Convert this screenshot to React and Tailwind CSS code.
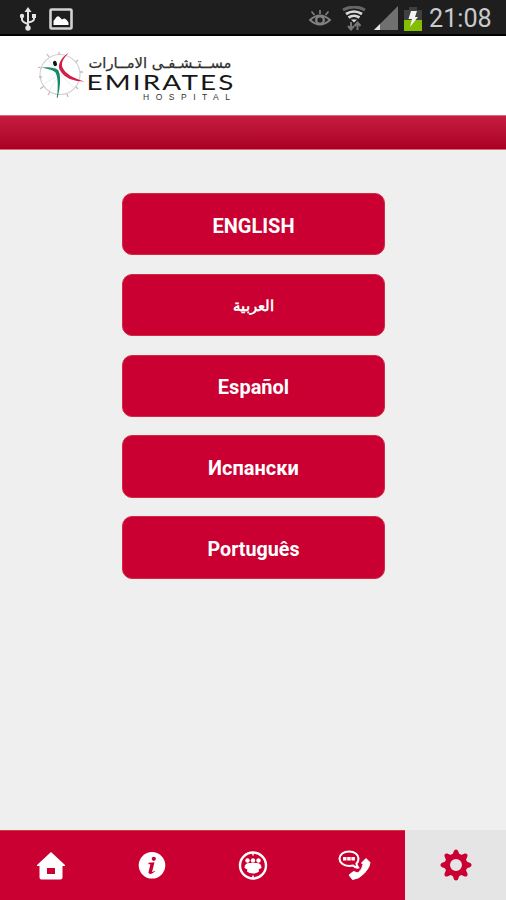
import { useState } from "react";

const languages = [
  { id: "en", label: "ENGLISH", className: "text-[20px] pt-[3px]" },
  { id: "ar", label: "العربية", className: "text-[15px] pt-[2px]" },
  { id: "es", label: "Español", className: "text-[20px] pt-[3px]" },
  { id: "ru", label: "Испански", className: "text-[20px] pt-[3px]" },
  { id: "pt", label: "Português", className: "text-[19.700px] pt-[4px]" },
];

function StatusBar() {
  return (
    <div className="flex h-[36px] shrink-0 items-center justify-between border-b-2 border-black bg-[#1e1e1e] pl-[19px] pr-[15px]">
      <div className="flex items-center gap-[12px] pt-[3px]">
        <svg width="18" height="24" viewBox="0 0 18 24" fill="none" stroke="#e4e4e4" strokeWidth="2">
          <path d="M9 3v18M3 9v3.500q0 2.500 6 4.500M15 9v3q0 2.500-6 3.500" />
          <path d="M9 0l3.500 5h-7z" fill="#e4e4e4" stroke="none" />
          <circle cx="9" cy="21" r="2.700" fill="#e4e4e4" stroke="none" />
          <circle cx="3" cy="9" r="2.200" fill="#e4e4e4" stroke="none" />
          <path d="M13 7h4v4h-4z" fill="#e4e4e4" stroke="none" />
        </svg>
        <svg width="24" height="22" viewBox="0 0 24 22">
          <rect x="1.500" y="1.500" width="21" height="19" rx="1" fill="none" stroke="#d2d2d2" strokeWidth="2.600" />
          <path d="M4.500 17v-4l3-4q2-2 4 1l1.500 1.500 2-1q2 0 4.500 4V17z" fill="#fff" />
        </svg>
      </div>
      <div className="flex items-center pt-[2px]">
        <svg width="22" height="17" viewBox="0 0 22 17" fill="none" stroke="#808080" strokeWidth="2.400">
          <path d="M1 10q10-9 20 0-10 9-20 0z" strokeWidth="2" />
          <circle cx="11" cy="10" r="3.800" />
          <path d="M11 4V0M5.500 5L2.500 1.500M16.500 5L19.500 1.500" strokeWidth="1.700" />
        </svg>
        <svg className="ml-[11px]" width="24" height="25" viewBox="0 0 24 25" fill="none">
          <path d="M1 4q11-6 22 0" stroke="#666" strokeWidth="3" />
          <path d="M4 8q8-5 16 0M6.500 11.500q5.500-3.500 11 0" stroke="#d8d8d8" strokeWidth="2.700" />
          <path d="M9 13.500h6L12 16.500z" fill="#ddd" />
          <path d="M9 16v7M6 20l3 3.500 3-3.500M15.500 24v-7M12.500 20l3-3.500 3 3.500" stroke="#777" strokeWidth="2" />
        </svg>
        <svg className="ml-[8px]" width="24" height="24" viewBox="0 0 24 24">
          <path d="M24 0v24H0z" fill="#707070" />
          <path d="M6 18v6H0z" fill="#e5e5e5" />
        </svg>
        <svg className="ml-[6px]" width="18" height="25" viewBox="0 0 18 25">
          <path d="M5 1h8v3h5v10H0V4h5z" fill="#404040" />
          <path d="M0 14h18v11H0z" fill="#85bd00" />
          <path d="M7 5h6l-2 6h3L6 21l2-8H4.500z" fill="#f3f3f3" />
        </svg>
        <span className="ml-[7px] w-[62px] whitespace-nowrap pt-px text-[25.200px] leading-[30px] text-[#cacaca]">21:08</span>
      </div>
    </div>
  );
}

function Logo() {
  return (
    <svg width="200" height="56" viewBox="36 48 200 56">
      <circle cx="60" cy="74.500" r="20" fill="none" stroke="#cfcfcf" strokeWidth="1.100" />
      <path
        d="M41 68l-3-1M44 86l-4 3M49 57l-2-3M59 55v-3M76 62l2-2M80 72h3M76 87l2 2M67 94l1 3M50 92l-2 3M42 77h-3"
        stroke="#bcbcbc"
        strokeWidth="1.300"
      />
      <path d="M60 74L48 60M60 74L44 84M60 74l14 14M60 74l-11 17" stroke="#e4e4e4" strokeWidth=".7" />
      <path d="M41.500 67.500q12-1 16.500 2.500c2.800 4 3 15-.5 28-.8 0-1-1 0-5 .5-8 .5-16-2-20.500-3-3-8-3.500-14-5z" fill="#168a62" />
      <path d="M69 52.500c-6 6-8 10.500-6.500 15C65.500 74 73 78 84.500 81.500c-10 0-20.500-3-25-12-2-5 1.500-12 9.500-17z" fill="#d51d49" />
      <ellipse cx="55" cy="63.500" rx="1.900" ry="2.700" fill="#151515" transform="rotate(-20 55 63.500)" />
      <text
        x="160" y="68" textAnchor="middle" direction="rtl" textLength="143" lengthAdjust="spacingAndGlyphs"
        fill="#303030" stroke="#303030" strokeWidth=".25"
        className="font-['DejaVu_Sans','Noto_Sans',sans-serif] text-[14px]"
      >
        مســتـشـفـى الامــارات
      </text>
      <g transform="translate(86.500 90.300) scale(1.36 1)">
        <text x="0" y="0" textLength="108" fill="#171717" className="font-['Lato',sans-serif] text-[20.500px]">
          EMIRATES
        </text>
      </g>
      <text x="143" y="100.300" textLength="87" fill="#333" className="font-['Liberation_Sans',sans-serif] text-[8.500px]">
        HOSPITAL
      </text>
    </svg>
  );
}

function HomeIcon() {
  return (
    <svg width="28" height="28" viewBox="0 0 28 28">
      <path
        d="M14 0L28 13v1h-2.500v11.500q0 2-2 2h-19q-2 0-2-2V14H0v-1zM10 16v6h8v-6z"
        fill="#fff" fillRule="evenodd"
      />
    </svg>
  );
}

function InfoIcon() {
  return (
    <svg width="28" height="28" viewBox="0 0 28 28">
      <circle cx="14" cy="13.300" r="13.300" fill="#fff" />
      <circle cx="15.800" cy="6.800" r="2.100" fill="#c90031" />
      <path d="M10.500 10.800l6-.5-2.400 9.500q0 .8 2.400-1.100l.4.700q-5 4.200-6.500 1.400l2-8.500h-2z" fill="#c90031" />
    </svg>
  );
}

function PeopleIcon() {
  return (
    <svg width="30" height="30" viewBox="0 0 30 30">
      <circle cx="15" cy="14.500" r="13" fill="none" stroke="#fff" strokeWidth="2.400" />
      <path d="M15 2v2.500M15 24.500V27" stroke="#fff" strokeWidth="1.500" />
      <g fill="#fff">
        <circle cx="9.500" cy="9.500" r="2.200" />
        <circle cx="15" cy="9.500" r="2.200" />
        <circle cx="20.500" cy="9.500" r="2.200" />
        <path d="M6.500 17q0-5 5-5h7q5 0 5 5l-3 1.500h-11z" />
        <path d="M9 20.500q0-4.500 4-4.500h4q4 0 4 4.500-2 2-6 2t-6-2z" />
      </g>
    </svg>
  );
}

function ContactIcon() {
  return (
    <svg className="mr-[2px]" width="34" height="32" viewBox="0 0 34 32">
      <path d="M12 1.500c-5.500 0-9.500 3-9.500 7s4 7.500 9.500 7.500l4-.5q2.500 2.500 5 2-1.500-2-1.500-4 2-2 2-5c0-4-4-7-9.500-7z" fill="none" stroke="#fff" strokeWidth="2.100" />
      <path d="M6 7h3.500v3.500H6zM10.200 7h3.500v3.500h-3.500zM14.400 7h3.500v3.500h-3.500z" fill="#fff" />
      <path d="M29 8.500l4 4q0 4.500-5.500 10.500t-12 6.500l-3.500-4.500 4.500-3.500 4.500 1.500q4.500-4 5-8.500l-1.500-1.500z" fill="#fff" stroke="#fff" strokeLinejoin="round" />
    </svg>
  );
}

function SettingsIcon() {
  const teeth = [0, 45, 90, 135, 180, 225, 270, 315];
  return (
    <svg className="ml-px" width="32" height="32" viewBox="0 0 32 32" fill="#c90031">
      {teeth.map((angle) => (
        <path key={angle} d="M11.500 8L14 1.700q2-2.500 4 0L20.500 8z" transform={`rotate(${angle} 16 16)`} />
      ))}
      <circle cx="16" cy="16" r="8.700" fill="none" stroke="#c90031" strokeWidth="5.400" />
    </svg>
  );
}

const tabs = [
  { id: "home", icon: HomeIcon },
  { id: "info", icon: InfoIcon },
  { id: "people", icon: PeopleIcon },
  { id: "contact", icon: ContactIcon },
  { id: "settings", icon: SettingsIcon },
];

function App() {
  const [active, setActive] = useState("settings");

  return (
    <div className="flex h-[900px] w-full flex-col bg-[#efefef] font-['Roboto',sans-serif]">
      <StatusBar />
      <header className="flex h-[79px] shrink-0 items-start bg-white pl-[36px] pt-[12px]">
        <Logo />
      </header>
      <div className="h-[35px] shrink-0 border-y border-[#d56b7d] bg-linear-to-b from-[#c71b40] to-[#a90023]" />

      <main className="flex flex-1 flex-col items-center gap-[18.400px] pl-px pt-[43px]">
        {languages.map((lang) => (
          <button
            key={lang.id}
            className={`h-[62.400px] w-[263px] rounded-[10px] border border-[#d32a43] bg-[#c90031] font-bold text-white ${lang.className}`}
          >
            {lang.label}
          </button>
        ))}
      </main>

      <nav className="grid h-[70px] shrink-0 grid-cols-5">
        {tabs.map(({ id, icon: Icon }) => (
          <button
            key={id}
            onClick={() => setActive(id)}
            className={`flex items-center justify-center pl-px ${active === id ? "bg-[#e5e5e5]" : "border-t border-[#d13a38] bg-[#c90031]"}`}
          >
            <Icon />
          </button>
        ))}
      </nav>
    </div>
  );
}

export default App;
